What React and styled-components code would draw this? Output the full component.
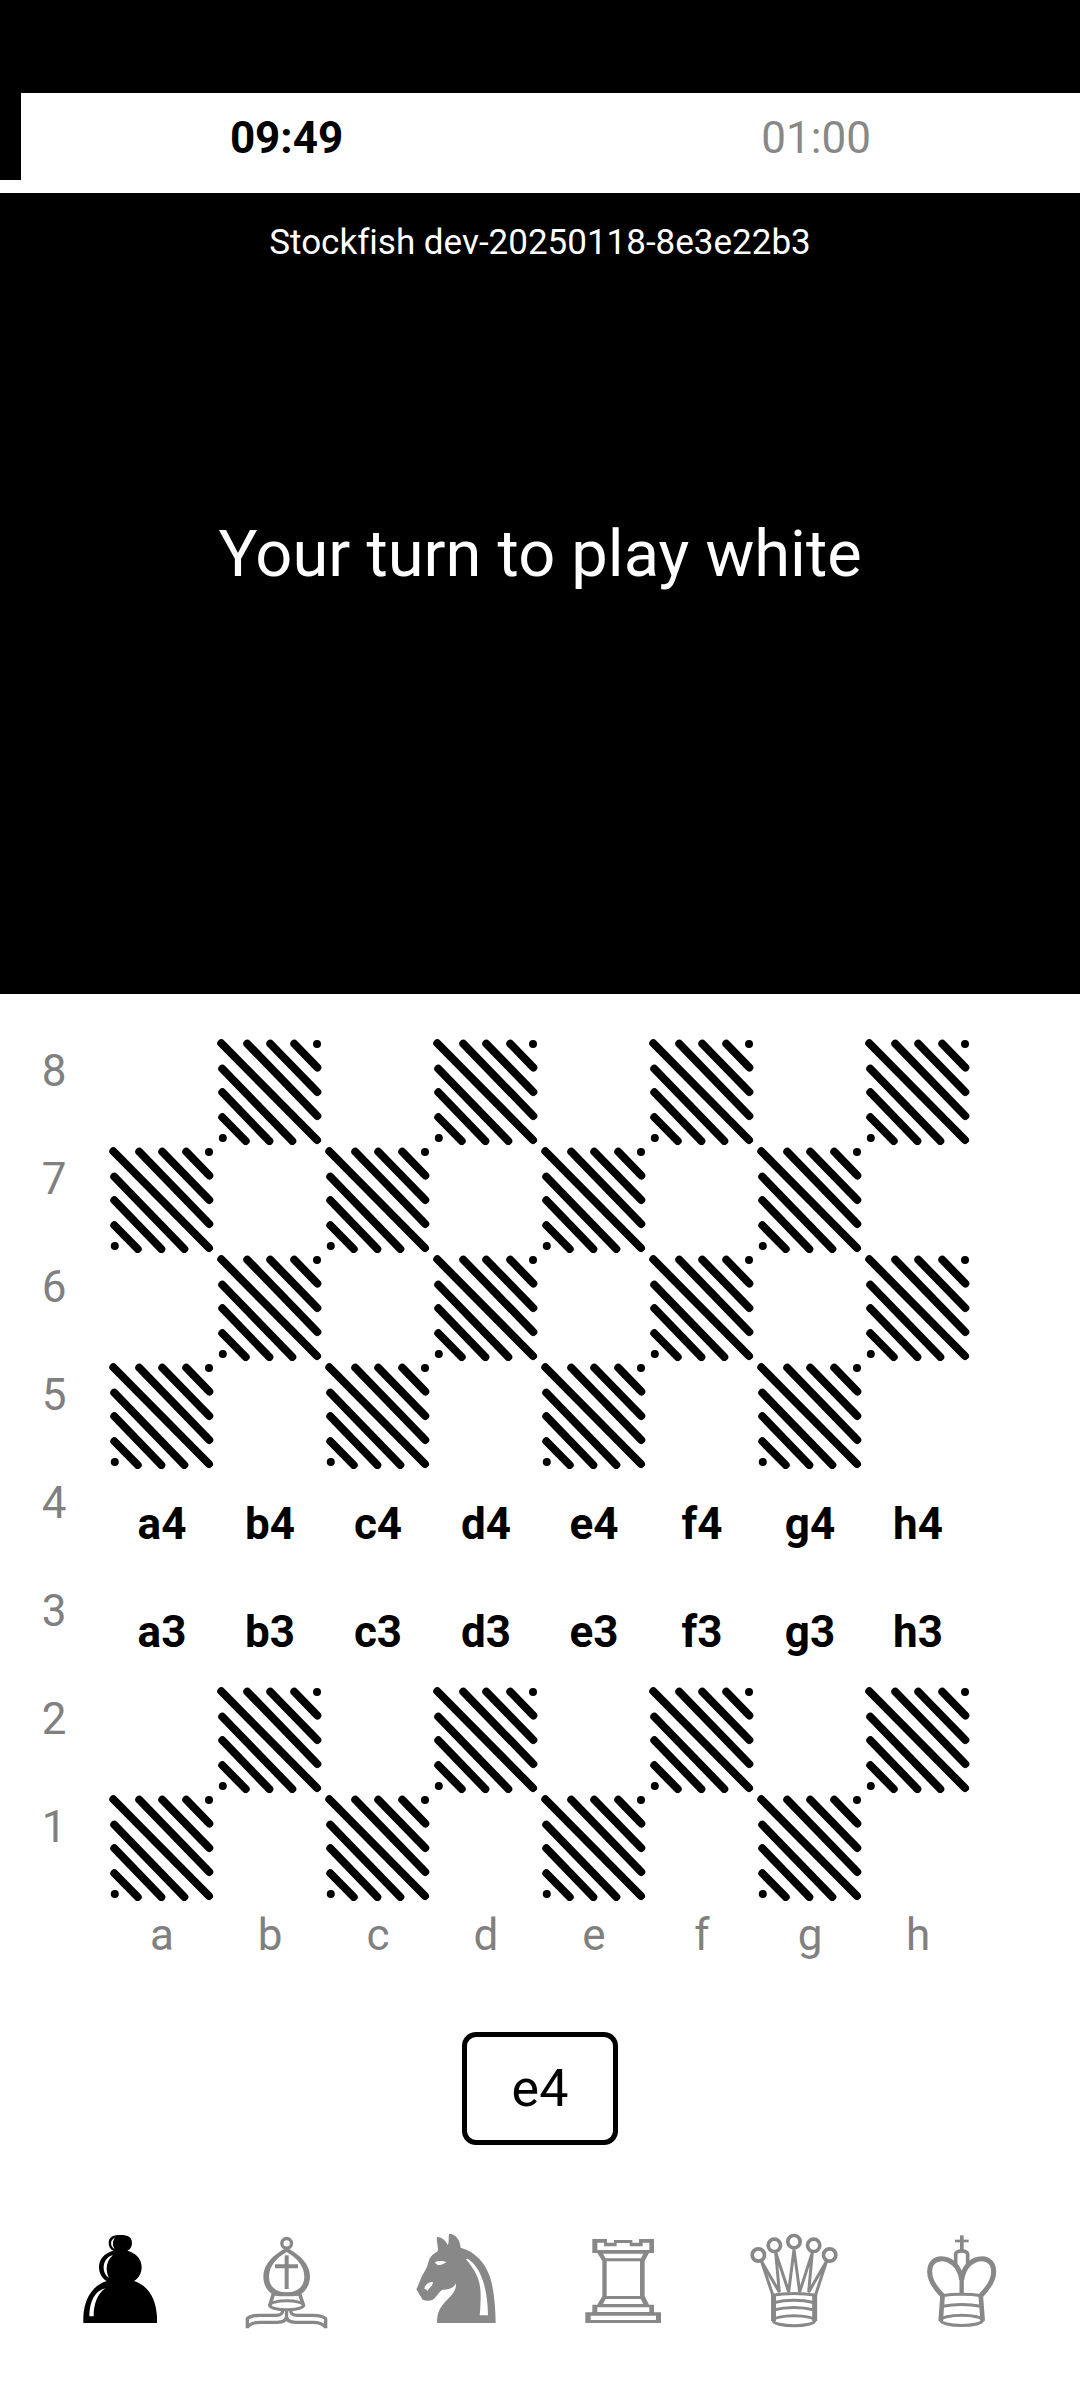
import React, { useState } from "react";
import styled, { createGlobalStyle } from "styled-components";

const GlobalStyle = createGlobalStyle`
  *, *::before, *::after { box-sizing: border-box; }
  body { margin: 0; background: #fff; }
`;

const Screen = styled.div`
  display: flex;
  flex-direction: column;
  min-height: 100vh;
  font-family: Roboto, "Noto Sans", sans-serif;
  font-variant-ligatures: none;
  color: #000;
  background: #fff;
`;

const StatusBar = styled.div`
  height: 93px;
  background: #000;
`;

const ClockBar = styled.header`
  display: flex;
  height: 100px;
`;

const Elapsed = styled.div`
  height: 87px;
  background: #000;
`;

const Clocks = styled.div`
  flex: 1;
  display: flex;
  justify-content: space-around;
  padding-top: 19px;
`;

const Clock = styled.time`
  font-size: 44px;
  line-height: 52px;
  font-weight: ${(p) => (p.$active ? 700 : 400)};
  color: ${(p) => (p.$active ? "#000" : "#888")};
`;

const Info = styled.section`
  flex: 1;
  display: flex;
  flex-direction: column;
  padding: 29px 24px 150px;
  background: #000;
  color: #fff;
  text-align: center;
`;

const Engine = styled.p`
  margin: 0;
  font-size: 35px;
  line-height: 42px;
`;

const Message = styled.h1`
  margin: auto 0;
  font-size: 65px;
  line-height: 78px;
  font-weight: 400;
`;

const Controls = styled.main`
  display: flex;
  flex-direction: column;
  align-items: center;
  padding: 43px 0 70px;
`;

const Board = styled.div`
  width: 100%;
  display: grid;
  grid-template-columns: repeat(10, 1fr);
`;

const Label = styled.span`
  grid-column: ${(p) => p.$column};
  padding-top: 8px;
  font-size: 44px;
  line-height: 52px;
  text-align: center;
  color: #808080;
`;

const Square = styled.button`
  aspect-ratio: 1;
  display: flex;
  align-items: center;
  justify-content: center;
  padding: ${(p) => (p.$open ? "2px 0 0" : "0")};
  border: 0;
  background: none;
  color: #000;
  font: 700 44px/52px Roboto, "Noto Sans", sans-serif;
  cursor: pointer;
`;

const HatchDrawing = styled.svg`
  display: block;
  width: 100%;
  height: 100%;
  fill: none;
  stroke: #000;
  stroke-width: 8;
  stroke-linecap: round;
`;

const MoveButton = styled.button`
  margin-top: 71px;
  padding: 21px 45px 21px;
  min-width: 156px;
  border: 5px solid #000;
  border-radius: 14px;
  background: #fff;
  color: #000;
  font: 400 52px/61px Roboto, "Noto Sans", sans-serif;
  cursor: pointer;
`;

const Pieces = styled.div`
  width: 100%;
  display: grid;
  grid-template-columns: repeat(6, 1fr);
  margin-top: 85px;
  padding: 0 36px;
`;

const PieceButton = styled.button`
  display: flex;
  justify-content: center;
  padding: 0;
  border: 0;
  background: none;
  color: ${(p) => (p.$active ? "#000" : "#888")};
  cursor: pointer;
`;

const PieceDrawing = styled.svg`
  display: block;
  width: 100px;
  height: 100px;
`;

function Hatch() {
  return (
    <HatchDrawing viewBox="0 0 108 108" aria-hidden="true">
      <path d="M5.3 6.3 101 103M31.3 6.7 101.3 79M54.3 6.7 101.3 55M78.3 6.7 101.3 30.5M101 7h.01M6.3 31.7 76.3 104M6.3 55.3 53.3 104M6.3 80.3 29.7 104M6.8 101h.01" />
    </HatchDrawing>
  );
}

const pieces = [
  {
    name: "Pawn",
    box: "30 60 300 300",
    art: (
      <>
        <path fill="currentColor" d="M70 339V322C72 270 94 228 140 213C126 205 117 190 117 171C117 147 134 129 160 122C151 118 146 110 146 99C146 83 156 75 181 75C206 75 216 83 216 99C216 110 211 118 202 122C228 129 245 147 245 171C245 190 236 205 222 213C268 228 289 270 291 322V339Z" />
        <path fill="#fff" d="M165 83C150 88 149 110 164 117C157 106 157 93 165 83ZM159 135C126 143 122 190 147 203C135 180 138 153 159 135ZM88 319H101C101 282 112 252 136 235C105 242 88 275 88 319Z" />
      </>
    ),
  },
  {
    name: "Bishop",
    box: "534 60 300 300",
    art: (
      <g fill="none" stroke="currentColor">
        <circle cx="680" cy="100" r="14.5" strokeWidth="10" />
        <path fill="currentColor" stroke="none" fillRule="evenodd" d="M680 113C718 132 750 162 750 198C750 226 737 243 719 256H640C622 243 610 226 610 198C610 162 642 132 680 113ZM680 126C652 142 627 168 627 200C627 232 651 247 680 247C709 247 733 232 733 200C733 168 708 142 680 126Z" />
        <path strokeWidth="12" d="M680 136V237M645 169H714" />
        <path strokeWidth="11" d="M640 252 629 288M719 252 731 288M640 251Q680 256 719 251" />
        <ellipse cx="680" cy="286" rx="51" ry="13.5" strokeWidth="9" />
        <path strokeWidth="10" strokeLinejoin="bevel" d="M668 301C668 313 661 316 648 316H600C580 316 569 319 562 326V355M562 352C570 341 584 337 600 337H652C670 337 679 332 679.5 320V301M692 301C692 313 699 316 712 316H759C779 316 790 319 797 326V355M797 352C789 341 775 337 759 337H707C689 337 680 332 679.5 320" />
      </g>
    ),
  },
  {
    name: "Knight",
    box: "78 60 300 300",
    art: (
      <>
        <path fill="currentColor" d="M171 339C171 308 180 291 200 271C215 256 229 243 228 220C222 232 210 239 188 239C178 243 168 262 158 269C148 274 137 272 128 269L109 238C118 220 122 202 135 182C142 172 144 160 148 148C152 138 162 130 173 124C176 108 168 95 171 81C188 82 199 93 203 106C208 97 205 85 207 71C226 71 240 88 242 113C290 127 315 160 329 198C343 240 346 290 347 339Z" />
        <path fill="#fff" d="M165 157C172 151 190 152 200 156C192 160 184 167 174 165C168 163 166 160 165 157ZM159 216C143 216 134 226 133 237C138 236 140 240 143 243C147 233 158 229 159 216ZM258 148C282 177 302 205 302 255C302 277 301 297 299 316H324C323 268 317 225 299 188C290 170 277 154 262 146Z" />
      </>
    ),
  },
  {
    name: "Rook",
    box: "582 60 300 300",
    art: (
      <path
        fill="currentColor"
        fillRule="evenodd"
        d="M637 87H681V98H702V90H757V98H777V87H822V129H807L794 153V258L807 284H822V307H843V339H616V307H637V284H652L667 258V153L652 129H637ZM652 98V120H808V98H788V109H749V99H710V109H672V98ZM669 131 677 145H783L790 131ZM680 154V258H780V154ZM677 267 669 282H790L782 267ZM652 292V306H808V292ZM632 317V330H828V317Z"
      />
    ),
  },
  {
    name: "Queen",
    box: "66 60 300 300",
    art: (
      <g fill="none" stroke="currentColor">
        <g strokeWidth="11">
          <circle cx="115" cy="135" r="18.5" />
          <circle cx="163" cy="106" r="18.5" />
          <circle cx="222" cy="95" r="18.5" />
          <circle cx="281" cy="106" r="18.5" />
          <circle cx="329" cy="135" r="18.5" />
        </g>
        <path strokeWidth="9" strokeLinejoin="bevel" d="M158 254 124 153 178 246 167 127 206 246 222 118 239 246 277 127 266 246 320 153 287 254" />
        <path strokeWidth="4" d="M127 158 178 248M168 132 206 248M276 132 238 248M317 158 266 248" />
        <path strokeWidth="15" d="M160.5 252V333M284 252V333" />
        <path strokeWidth="9" d="M155 256Q222 245 289 256M160 278Q222 264 284 278M160 300Q222 285 284 300" />
        <ellipse cx="222" cy="332" rx="62" ry="15" strokeWidth="9" />
      </g>
    ),
  },
  {
    name: "King",
    box: "570 60 300 300",
    art: (
      <g fill="none" stroke="currentColor">
        <path strokeWidth="11" d="M725.5 76V122" />
        <path strokeWidth="8" d="M705 93H746" />
        <path strokeWidth="11" d="M707 167V134Q707 123 725 123Q743 123 743 134V167" />
        <path strokeWidth="15" d="M668 257C645 234 629 211 629 185C629 160 645 146 664 146C692 146 719 168 725 210C731 168 758 146 786 146C805 146 821 160 821 185C821 211 805 234 782 257" />
        <path strokeWidth="13" d="M725 198V250" />
        <path strokeWidth="14" d="M668 254 662 333M782 254 788 333" />
        <path strokeWidth="9" d="M664 257Q725 249 786 257M667 289Q725 278 783 289" />
        <ellipse cx="725" cy="331" rx="63" ry="15.5" strokeWidth="9" />
      </g>
    ),
  },
];

const ranks = [8, 7, 6, 5, 4, 3, 2, 1];
const files = ["a", "b", "c", "d", "e", "f", "g", "h"];
const openRanks = [4, 3];

function Rank({ rank }) {
  const open = openRanks.includes(rank);
  return (
    <>
      <Label $column={1}>{rank}</Label>
      {files.map((file, i) => (
        <Square key={file} type="button" $open={open} aria-label={file + rank}>
          {open ? file + rank : (i + rank) % 2 === 1 && <Hatch />}
        </Square>
      ))}
      <span />
    </>
  );
}

export default function App() {
  const [piece, setPiece] = useState("Pawn");
  return (
    <Screen>
      <GlobalStyle />
      <StatusBar />
      <ClockBar>
        <Elapsed style={{ width: `${(11 / 570) * 100}%` }} />
        <Clocks>
          <Clock $active>09:49</Clock>
          <Clock>01:00</Clock>
        </Clocks>
      </ClockBar>
      <Info>
        <Engine>Stockfish dev-20250118-8e3e22b3</Engine>
        <Message>Your turn to play white</Message>
      </Info>
      <Controls>
        <Board>
          {ranks.map((rank) => (
            <Rank key={rank} rank={rank} />
          ))}
          {files.map((file, i) => (
            <Label key={file} $column={i + 2}>
              {file}
            </Label>
          ))}
        </Board>
        <MoveButton type="button">e4</MoveButton>
        <Pieces>
          {pieces.map(({ name, box, art }) => (
            <PieceButton
              key={name}
              type="button"
              aria-label={name}
              aria-pressed={piece === name}
              $active={piece === name}
              onClick={() => setPiece(name)}
            >
              <PieceDrawing viewBox={box} aria-hidden="true">
                {art}
              </PieceDrawing>
            </PieceButton>
          ))}
        </Pieces>
      </Controls>
    </Screen>
  );
}
